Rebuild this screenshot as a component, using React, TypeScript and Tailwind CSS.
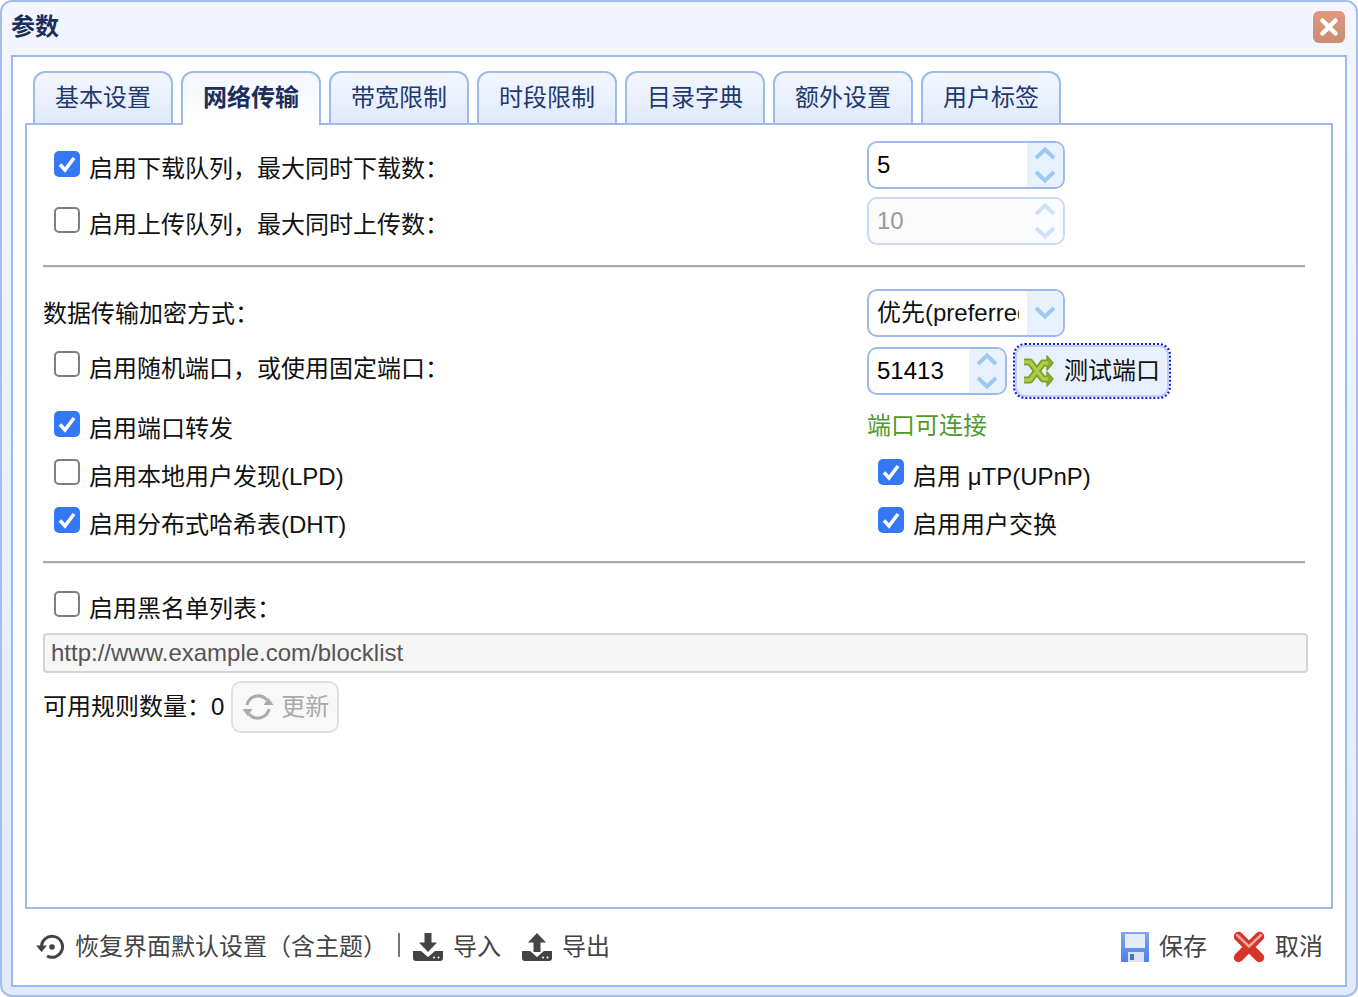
import type { ReactNode } from 'react';

const tabs = ['基本设置', '网络传输', '带宽限制', '时段限制', '目录字典', '额外设置', '用户标签'];

function Chevron({ up, light }: { up?: boolean; light?: boolean }) {
  return (
    <svg viewBox="0 0 22 14" className={light ? 'w-[22px] h-[14px] opacity-50' : 'w-[22px] h-[14px]'}>
      <polyline
        points={up ? '2,12 11,3.5 20,12' : '2,2 11,10.5 20,2'}
        fill="none"
        stroke="#9ec9f2"
        strokeWidth="4"
      />
    </svg>
  );
}

function Spinner({ value, width, disabled }: { value: string; width: string; disabled?: boolean }) {
  return (
    <div
      className={`flex h-[48px] ${width} overflow-hidden rounded-[10px] border-2 ${
        disabled ? 'border-[#c8d9f3] bg-[#fbfbfb]' : 'border-[#9dbbe8] bg-white'
      }`}
    >
      <div className={`flex-1 pl-[8px] leading-[44px] ${disabled ? 'text-[#999999]' : 'text-black'}`}>{value}</div>
      <div
        className={`flex w-[36px] flex-col items-center justify-center gap-[10px] ${
          disabled ? 'bg-[#fbfcff]' : 'bg-[#e8f1fe]'
        }`}
      >
        <Chevron up light={disabled} />
        <Chevron light={disabled} />
      </div>
    </div>
  );
}

function Check({ checked, children, className }: { checked?: boolean; children: ReactNode; className?: string }) {
  return (
    <div className={`flex items-start gap-[9px] pl-[11px] ${className ?? ''}`}>
      {checked ? (
        <div className="flex h-[26px] w-[26px] shrink-0 items-center justify-center rounded-[5px] bg-[#3478f6]">
          <svg viewBox="0 0 26 26" className="h-[26px] w-[26px]">
            <polyline points="6,13.5 11,19 20,7" fill="none" stroke="#ffffff" strokeWidth="3.6" />
          </svg>
        </div>
      ) : (
        <div className="h-[26px] w-[26px] shrink-0 rounded-[5px] border-2 border-[#7f7f7f] bg-white" />
      )}
      <span className="mt-[2px] leading-[32px] text-[#111111]">{children}</span>
    </div>
  );
}

function Divider({ className }: { className: string }) {
  return <div className={`h-[2px] w-[1262px] bg-[#a8a8a8] shadow-[0_1px_0_#ececec] ${className}`} />;
}

function ShuffleIcon() {
  return (
    <svg viewBox="0 0 32 32" className="h-[32px] w-[32px] shrink-0" fill="none" strokeLinejoin="round">
      <path d="M2 7h6l13 17h4M2 25h6l13-17h4" stroke="#7f9f2c" strokeWidth="7" />
      <path d="M25 1l6 7-6 7zM25 17l6 7-6 7z" fill="#8fb033" stroke="#7f9f2c" strokeWidth="1.500" />
      <path d="M2 7h6l13 17h5M2 25h6l13-17h5" stroke="#a9cf47" strokeWidth="3.500" />
    </svg>
  );
}

function RefreshIcon() {
  return (
    <svg viewBox="0 0 32 32" className="h-[32px] w-[32px] shrink-0" fill="none" stroke="#aaaaaa" strokeWidth="3">
      <path d="M5 14A11.500 11.500 0 0 1 25 9" />
      <path d="M27 18A11.500 11.500 0 0 1 7 23" />
      <path d="M21.500 14h10l-5-7z" fill="#aaaaaa" stroke="none" />
      <path d="M0.500 18h10l-5 7z" fill="#aaaaaa" stroke="none" />
    </svg>
  );
}

function ResetIcon() {
  return (
    <svg viewBox="0 0 30 28" className="h-[28px] w-[30px] shrink-0">
      <path d="M6.500 14A10.500 10.500 0 1 1 12 23" fill="none" stroke="#444444" strokeWidth="3" />
      <path d="M1 12.500h11l-5.500 6.500z" fill="#444444" />
      <circle cx="17" cy="14" r="2.800" fill="#444444" />
    </svg>
  );
}

function TrayIcon({ up }: { up?: boolean }) {
  return (
    <svg viewBox="0 0 30 28" className="h-[28px] w-[30px] shrink-0">
      <path
        d={up ? 'M15 0l9 9.500h-5.500V19h-7V9.500H6z' : 'M11.500 0h7v9.500H24L15 19 6 9.500h5.500z'}
        fill="#444444"
      />
      <path d="M0 18h8l7 6 7-6h8v7a3 3 0 0 1-3 3H3a3 3 0 0 1-3-3z" fill="#444444" />
      <circle cx="21" cy="24.500" r="1" fill="#ffffff" />
      <circle cx="25.500" cy="24.500" r="1" fill="#ffffff" />
    </svg>
  );
}

function SaveIcon() {
  return (
    <svg viewBox="0 0 28 30" className="h-[30px] w-[28px] shrink-0">
      <defs>
        <linearGradient id="saveBody" x1="0" y1="0" x2="0" y2="1">
          <stop offset="0" stopColor="#7fa6ec" />
          <stop offset="1" stopColor="#4a80ea" />
        </linearGradient>
      </defs>
      <rect width="28" height="30" rx="1" fill="url(#saveBody)" />
      <rect x="4" y="2" width="20" height="14" fill="#e6ebfa" />
      <rect x="7" y="20" width="16" height="10" fill="#dbe3f6" />
      <rect x="9" y="22" width="4" height="6" fill="#4a74cc" />
    </svg>
  );
}

function CancelIcon() {
  return (
    <svg viewBox="0 0 32 32" className="h-[32px] w-[32px] shrink-0">
      <path d="M5.500 5.500l10.500 10.500 10.500-10.500M5.500 26.500l10.500-10.500 10.500 10.500" fill="none" stroke="#d5352b" strokeWidth="9.500" strokeLinecap="round" />
      <path d="M4 4l12 11.500L28 4" fill="none" stroke="#eda79f" strokeWidth="2.500" strokeLinecap="round" />
    </svg>
  );
}

function FooterItem({ icon, label, className }: { icon: ReactNode; label: string; className?: string }) {
  return (
    <div className={`flex items-center gap-[10px] text-[#444444] ${className ?? ''}`}>
      {icon}
      <span className="leading-[32px]">{label}</span>
    </div>
  );
}

export default function App() {
  return (
    <div className="h-[997px] w-[1358px] overflow-hidden bg-white font-['Liberation_Sans','Noto_Sans_CJK_SC',sans-serif] text-[24px]">
      <div className="h-full rounded-[12px] border-2 border-[#a3bfe9] bg-gradient-to-b from-[#f3f6ff] to-[#e0eafc] px-[9px]">
        <div className="flex h-[53px] items-center justify-between pb-[3px] pr-[2px]">
          <span className="font-bold text-[#1b2f5c]">参数</span>
          <div className="flex h-[32px] w-[32px] items-center justify-center rounded-[6px] bg-gradient-to-b from-[#e0987c] to-[#c98d72]">
            <svg viewBox="0 0 20 20" className="h-[20px] w-[20px]">
              <path d="M3.500 3.500l13 13M16.500 3.500l-13 13" stroke="#ffffff" strokeWidth="4.500" strokeLinecap="round" />
            </svg>
          </div>
        </div>

        <div className="h-[932px] border-2 border-[#9dbbe8] bg-white pt-[14px]">
          <div className="relative z-10 mx-[12px] flex h-[52px] items-start gap-[8px] pl-[8px]">
            {tabs.map((tab, idx) => (
              <div
                key={tab}
                className={
                  idx === 1
                    ? 'flex h-[54px] w-[140px] justify-center rounded-t-[12px] border-2 border-b-0 border-[#9dbbe8] bg-gradient-to-b from-[#f3f6ff] to-white pt-[9px] font-bold leading-[32px] text-[#1b2f5c]'
                    : 'flex h-[52px] w-[140px] justify-center rounded-t-[12px] border-2 border-b-0 border-[#9dbbe8] bg-gradient-to-b from-[#f3f6ff] to-[#e0eafc] pt-[9px] leading-[32px] text-[#1f3a6e]'
                }
              >
                {tab}
              </div>
            ))}
          </div>

          <div className="mx-[12px] h-[786px] border-2 border-[#9dbbe8] pl-[16px] pt-[12px]">
            <div className="flex h-[56px]">
              <Check checked className="w-[824px] pt-[14px]">启用下载队列，最大同时下载数：</Check>
              <div className="flex items-center">
                <Spinner value="5" width="w-[198px]" />
              </div>
            </div>
            <div className="flex h-[56px]">
              <Check className="w-[824px] pt-[14px]">启用上传队列，最大同时上传数：</Check>
              <div className="flex items-center">
                <Spinner value="10" width="w-[198px]" disabled />
              </div>
            </div>

            <Divider className="mt-[16px]" />

            <div className="mt-[18px] flex h-[56px] items-center">
              <div className="w-[824px] pt-[2px] leading-[32px] text-[#111111]">数据传输加密方式：</div>
              <div className="flex h-[48px] w-[198px] overflow-hidden rounded-[10px] border-2 border-[#9dbbe8]">
                <div className="ml-[8px] mr-[8px] flex-1 overflow-hidden whitespace-nowrap leading-[44px] text-[#111111]">
                  优先(preferred)
                </div>
                <div className="flex w-[36px] items-center justify-center bg-[#e8f1fe]">
                  <Chevron />
                </div>
              </div>
            </div>

            <div className="mt-[2px] flex h-[56px]">
              <Check className="w-[824px] pt-[8px]">启用随机端口，或使用固定端口：</Check>
              <div className="flex items-center">
                <Spinner value="51413" width="w-[140px]" />
                <div className="ml-[8px] flex h-[52px] w-[154px] items-center gap-[10px] rounded-[10px] border-2 border-[#bcd0f0] bg-[#e9f0fd] pl-[5px] leading-[32px] text-[#111111] outline-2 outline-dotted outline-[#1a1ae6]">
                  <ShuffleIcon />
                  <span>测试端口</span>
                </div>
              </div>
            </div>

            <div className="mt-[4px] flex h-[48px]">
              <Check checked className="w-[824px] pt-[8px]">启用端口转发</Check>
              <div className="flex items-center pb-[2px] text-[#4f9a2e]">端口可连接</div>
            </div>
            <div className="mt-[1px] flex h-[48px]">
              <Check className="w-[824px] pt-[7px]">启用本地用户发现(LPD)</Check>
              <Check checked className="pt-[7px]">启用 μTP(UPnP)</Check>
            </div>
            <div className="flex h-[48px]">
              <Check checked className="w-[824px] pt-[7px]">启用分布式哈希表(DHT)</Check>
              <Check checked className="pt-[7px]">启用用户交换</Check>
            </div>

            <Divider className="mt-[13px]" />

            <Check className="mt-[21px] h-[48px] pt-[7px]">启用黑名单列表：</Check>

            <div className="mt-[1px] h-[40px] w-[1265px] rounded-[4px] border-2 border-[#d4d4d4] bg-[#f6f6f6] pl-[6px] leading-[36px] text-[#555555]">
              http://www.example.com/blocklist
            </div>

            <div className="mt-[8px] flex h-[52px] items-center">
              <span className="pb-[1px] leading-[32px] text-[#111111]">可用规则数量：</span>
              <span className="pb-[1px] text-[#111111]">0</span>
              <div className="ml-[7px] flex h-[52px] w-[108px] items-center gap-[7px] rounded-[10px] border-2 border-[#e0e0e0] bg-[#f8f8f8] pl-[9px] text-[#aaaaaa]">
                <RefreshIcon />
                <span>更新</span>
              </div>
            </div>
          </div>

          <div className="mx-[12px] flex h-[76px] items-center justify-between pl-[10px] pr-[10px]">
            <div className="flex items-center">
              <FooterItem icon={<ResetIcon />} label="恢复界面默认设置（含主题）" />
              <div className="mb-[4px] ml-[11px] h-[24px] w-[2px] bg-[#777777]" />
              <FooterItem icon={<TrayIcon />} label="导入" className="ml-[13px]" />
              <FooterItem icon={<TrayIcon up />} label="导出" className="ml-[21px]" />
            </div>
            <div className="flex items-center">
              <FooterItem icon={<SaveIcon />} label="保存" />
              <FooterItem icon={<CancelIcon />} label="取消" className="ml-[26px]" />
            </div>
          </div>
        </div>
      </div>
    </div>
  );
}
